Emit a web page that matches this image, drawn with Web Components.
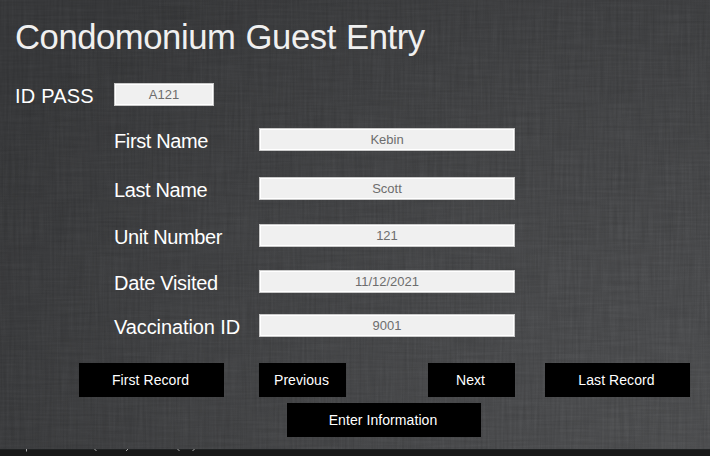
<!DOCTYPE html>
<html lang="en"><head><meta charset="utf-8"><title>Guest Entry</title>
<style>html,body{margin:0;width:710px;height:456px;overflow:hidden;background:#191919}</style></head><body>
<guest-form></guest-form>
<script>
class LinenTexture extends HTMLElement{constructor(){super();this.attachShadow({mode:'open'}).innerHTML=`
<style>:host{position:absolute;inset:0;background:radial-gradient(ellipse 820px 620px at 100% 100%,#555658 0%,#505153 32%,#48494b 64%,#3d3e40 100%)}svg{display:block;width:100%;height:100%}</style>
<svg aria-hidden="true"><filter id="v" x="0" y="0" width="100%" height="100%" color-interpolation-filters="sRGB"><feTurbulence type="fractalNoise" baseFrequency=".42 .02" numOctaves="2" seed="4"/><feColorMatrix values="0 0 0 0 0  0 0 0 0 0  0 0 0 0 0  1.3 0 0 0 -.3"/></filter>
<filter id="h" x="0" y="0" width="100%" height="100%" color-interpolation-filters="sRGB"><feTurbulence type="fractalNoise" baseFrequency=".02 .42" numOctaves="2" seed="9"/><feColorMatrix values="0 0 0 0 0  0 0 0 0 0  0 0 0 0 0  1.3 0 0 0 -.3"/></filter>
<rect width="100%" height="100%" filter="url(#v)" opacity=".13"/><rect width="100%" height="100%" filter="url(#h)" opacity=".11"/></svg>`}}
customElements.define('linen-texture',LinenTexture);

class FormField extends HTMLElement{constructor(){super();this.attachShadow({mode:'open'}).innerHTML=`
<style>:host{display:grid;grid-template-columns:var(--label,145px) var(--box,256px);height:23px}
.l{font-size:20px;line-height:23px;letter-spacing:var(--track,-.38px);color:#fff;white-space:nowrap;padding-top:2px;height:23px}
.b{box-sizing:border-box;height:23px;background:#f0f0f0;border:1px solid #c9c9c9;box-shadow:inset 0 0 0 1px #fff;color:#6d6d6d;font-size:13px;line-height:21px;letter-spacing:0;text-align:center}</style>
<div class="l"><slot></slot></div><div class="b"><slot name="value"></slot></div>`}}
customElements.define('form-field',FormField);

class RecordButton extends HTMLElement{constructor(){super();this.attachShadow({mode:'open'}).innerHTML=`
<style>:host{display:block;height:34px}button{display:block;width:100%;height:34px;border:0;padding:0 2px 0 0;background:#000;color:#fff;font:14px/34px "Liberation Sans",Arial,sans-serif;letter-spacing:.07px;text-align:center}</style>
<button><slot></slot></button>`}}
customElements.define('record-button',RecordButton);

class BottomStrip extends HTMLElement{constructor(){super();this.attachShadow({mode:'open'}).innerHTML=`
<style>:host{display:block;height:7px;background:linear-gradient(#202223 1px,#191919 1px)}svg{display:block}</style>
<svg width="710" height="7" fill="none" stroke="#a9a9a9" aria-hidden="true"><path d="M26.5 0v2.5M94.5 0l2 2M128 0l-2 2M177.5 0l2 2M194.5 0l-2 2"/></svg>`}}
customElements.define('bottom-strip',BottomStrip);

class GuestForm extends HTMLElement{constructor(){super();this.attachShadow({mode:'open'}).innerHTML=`
<style>:host{display:block;width:710px;height:456px;font-family:"Liberation Sans",Arial,sans-serif}
main{position:relative;height:449px;box-sizing:border-box;overflow:hidden}
.c{position:relative;display:flow-root}
h1{margin:17px 0 0 15px;font-size:34.67px;line-height:40px;height:40px;font-weight:400;letter-spacing:-.45px;word-spacing:1px;color:#f0f0f0;white-space:nowrap}
.id{margin:26px 0 0 15px;--label:99px;--box:100px;--track:.2px}
.wide{--track:-.1px}
.fields{margin:22px 0 0 114px;display:grid;grid-template-rows:49px 47px 46px 44px 23px}
.nav{margin:26px 0 0 79px;display:grid;grid-template-columns:145px 35px 87px 82px 87px 30px 145px}
.nav :nth-child(2){grid-column:3}.nav :nth-child(3){grid-column:5}.nav :nth-child(4){grid-column:7}
.enter{margin:6px 0 0 287px;width:194px}</style>
<main><linen-texture></linen-texture><div class="c"><h1>Condomonium Guest Entry</h1>
<form-field class="id">ID PASS<span slot="value">A121</span></form-field>
<div class="fields"><form-field>First Name<span slot="value">Kebin</span></form-field><form-field>Last Name<span slot="value">Scott</span></form-field><form-field>Unit Number<span slot="value">121</span></form-field><form-field style="--track:-.3px">Date Visited<span slot="value">11/12/2021</span></form-field><form-field class="wide">Vaccination ID<span slot="value">9001</span></form-field></div>
<div class="nav"><record-button>First Record</record-button><record-button>Previous</record-button><record-button>Next</record-button><record-button>Last Record</record-button></div>
<record-button class="enter">Enter Information</record-button></div></main><bottom-strip></bottom-strip>`}}
customElements.define('guest-form',GuestForm);
</script></body></html>
